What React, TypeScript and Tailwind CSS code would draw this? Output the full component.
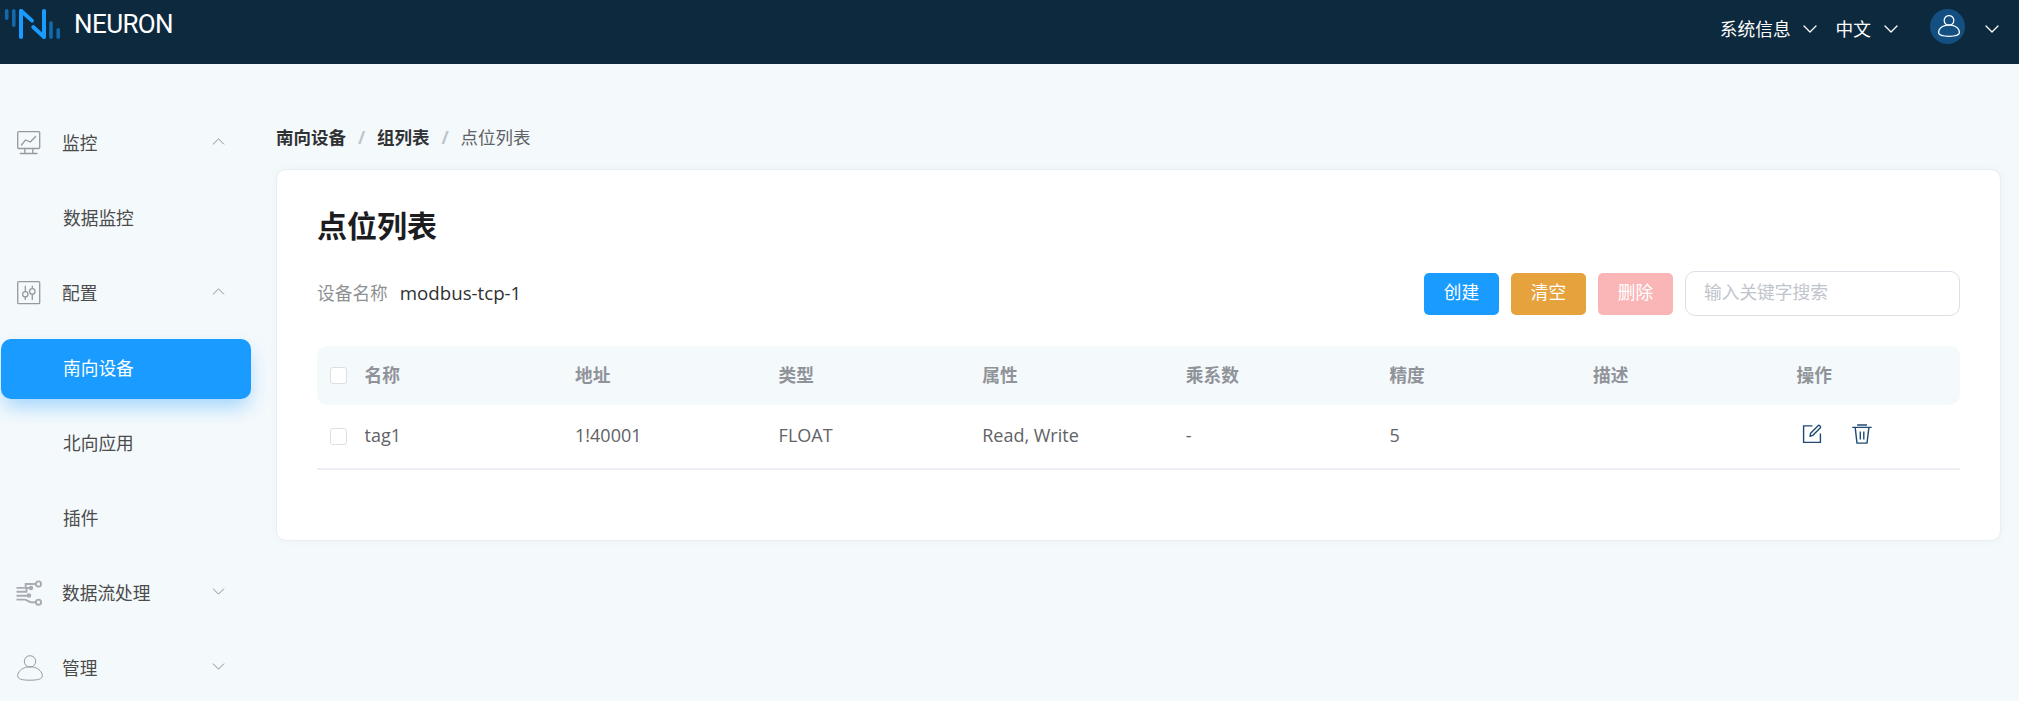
import type { ReactNode } from 'react';

function Chevron({ up = false, className = '' }: { up?: boolean; className?: string }) {
  return (
    <svg viewBox="0 0 14 8" fill="none" stroke="currentColor" strokeLinecap="round" strokeLinejoin="round" className={className}>
      <path d={up ? 'M1 7 L7 1 L13 7' : 'M1 1 L7 7 L13 1'} vectorEffect="non-scaling-stroke" />
    </svg>
  );
}

function Logo() {
  return (
    <svg viewBox="0 0 62 44" className="h-11 w-[62px]" fill="none" stroke="#1a9bff" strokeLinecap="round">
      <g stroke="#1469ab" strokeWidth="3.6">
        <path d="M6.7 10.8V18.2M13.8 10.8V25.2M51 23V37.2M58.2 29.8V37.2" />
      </g>
      <path d="M21 11V37M44 11V37" strokeWidth="4" />
      <path d="M21.2 11L32 20.7M33.2 27L44 37" strokeWidth="3.8" />
    </svg>
  );
}

function UserShape({ className = '' }: { className?: string }) {
  return (
    <svg viewBox="0 0 26 26" fill="none" stroke="currentColor" className={className}>
      <circle cx="13" cy="6.4" r="5.7" />
      <path d="M8.8 12.3C4.2 13.6 .7 17 .7 20.8c0 3.2 4 4.4 12.3 4.4s12.3-1.2 12.3-4.4c0-3.8-3.5-7.2-8.1-8.5-2.6-.7-5.8-.7-8.4 0z" />
    </svg>
  );
}

function MonitorIcon() {
  return (
    <svg viewBox="0 0 26 26" className="ml-px h-[26px] w-[26px]" fill="none" stroke="currentColor" strokeWidth="1.3">
      <rect x="1.7" y="1.7" width="22" height="16.8" rx="1" />
      <path d="M5.5 15L9.5 10L14.3 12L19.6 6.5M8.8 18.5V23.4M16.8 18.5V23.4M4.3 23.5H21" strokeLinecap="round" />
    </svg>
  );
}

function SlidersIcon() {
  return (
    <svg viewBox="0 0 26 26" className="ml-px h-[26px] w-[26px]" fill="none" stroke="currentColor" strokeWidth="1.3">
      <rect x="1.7" y="1.7" width="22" height="22" rx="1" />
      <path d="M9.3 5.8V11.5M9.3 17.2V20M16.3 5.8V8.6M16.3 14.2V20" />
      <circle cx="9.3" cy="14.3" r="2.7" />
      <circle cx="16.3" cy="11.4" r="2.7" />
    </svg>
  );
}

function FlowIcon() {
  return (
    <svg viewBox="0 0 28 28" className="h-7 w-7 text-[#a9acb2]" fill="none" stroke="currentColor" strokeWidth="1.9">
      <path d="M1.5 8.9H10.7V5H21M1.5 12.8H11.5V9H16M1.5 16.7H14M1.5 20.6H9.5C12 20.6 13.5 23.2 16 23.2H21" />
      <circle cx="23.5" cy="5" r="2.6" />
      <circle cx="23.5" cy="23.2" r="2.6" />
      <circle cx="16" cy="9" r="1.3" fill="currentColor" />
      <circle cx="14" cy="16.6" r="1.3" fill="currentColor" />
    </svg>
  );
}

function EditIcon() {
  return (
    <svg viewBox="0 0 20 20" className="h-5 w-5" fill="none" stroke="currentColor" strokeWidth="1.4">
      <path d="M10.5 1.9H1.6V18.4H18.4V9.5" />
      <path d="M8 12.3L8.6 9.3L16.3 1.6C17.2.8 19.3 2.5 18.4 3.7L10.7 11.4L8 12.3Z" strokeLinejoin="round" />
    </svg>
  );
}

function TrashIcon() {
  return (
    <svg viewBox="0 0 20 20" className="h-5 w-5" fill="none" stroke="currentColor" strokeWidth="1.4">
      <path d="M5.2 1H15M.3 3.4H19.7M3.2 3.6L5 19.1H15L16.9 3.6" />
      <path d="M8.3 7.5V15.5M11.8 7.5V15.5" />
    </svg>
  );
}

function MenuGroup({ icon, label, open = false }: { icon: ReactNode; label: string; open?: boolean }) {
  return (
    <div className="flex h-[75px] items-center text-[#4b4b4b]">
      <span className="ml-[15px] flex w-[47px] items-center text-[#96999d]">{icon}</span>
      <span className="flex-1">{label}</span>
      <Chevron up={open} className="mr-[26px] mb-0.5 h-[7px] w-[13px] text-[#8d9195]" />
    </div>
  );
}

function MenuItem({ label, active = false }: { label: string; active?: boolean }) {
  return active ? (
    <div className="mt-[9px] mb-[6px] ml-px flex h-[60px] w-[250px] items-center rounded-[10px] bg-[#1a9bff] pb-0.5 pl-[62px] text-white shadow-[0_10px_20px_-3px_rgba(26,155,255,0.4)]">
      {label}
    </div>
  ) : (
    <div className="flex h-[75px] items-center pl-[63px] text-[#4b4b4b]">{label}</div>
  );
}

function Checkbox() {
  return <span className="ml-[12.5px] block h-[17.5px] w-[17.5px] rounded-[3px] border border-[#dcdfe6] bg-white" />;
}

const GRID = 'grid grid-cols-[47.5px_210.5px_repeat(6,203.6px)_1fr] items-center';
const HEADERS = ['名称', '地址', '类型', '属性', '乘系数', '精度', '描述', '操作'];
const ROW = ['tag1', '1!40001', 'FLOAT', 'Read, Write', '-', '5', ''];

export default function App() {
  return (
    <div className="flex h-[701px] w-full flex-col overflow-hidden bg-[#f4f9fc] font-['Open_Sans','Noto_Sans_CJK_SC',sans-serif] text-[17.7px] leading-6">
      <header className="flex h-16 shrink-0 items-start bg-[#0d293e] text-white">
        <Logo />
        <span className="mt-[9px] ml-3 font-['Roboto',sans-serif] text-[26px] leading-[30px] tracking-[-0.6px]">NEURON</span>
        <div className="ml-auto flex h-[58px] items-center">
          <span>系统信息</span>
          <Chevron className="ml-3 h-2 w-[14px] stroke-[1.3]" />
          <span className="ml-[19px]">中文</span>
          <Chevron className="ml-[13px] h-2 w-[14px] stroke-[1.3]" />
          <span className="mb-[5px] ml-8 flex h-[35px] w-[35px] items-center justify-center rounded-full bg-[#134f80]">
            <UserShape className="mb-0.5 ml-0.5 h-[22px] w-[22px] stroke-[1.5]" />
          </span>
          <Chevron className="mr-5 ml-5 h-2 w-[14px] stroke-[1.3]" />
        </div>
      </header>

      <div className="flex min-h-0 flex-1">
        <nav className="w-[251px] shrink-0 pt-[41px]">
          <MenuGroup icon={<MonitorIcon />} label="监控" open />
          <MenuItem label="数据监控" />
          <MenuGroup icon={<SlidersIcon />} label="配置" open />
          <MenuItem label="南向设备" active />
          <MenuItem label="北向应用" />
          <MenuItem label="插件" />
          <MenuGroup icon={<FlowIcon />} label="数据流处理" />
          <MenuGroup icon={<UserShape className="ml-0.5 h-[26px] w-[26px]" />} label="管理" />
        </nav>

        <main className="ml-[25px] w-[1725px] pt-[61px]">
          <div className="flex h-6 items-center text-[17.5px]">
            <span className="font-bold text-[#303133]">南向设备</span>
            <span className="mx-[11px] w-[9px] text-center font-bold text-[#c0c4cc]">/</span>
            <span className="font-bold text-[#303133]">组列表</span>
            <span className="mx-[11px] w-[9px] text-center font-bold text-[#c0c4cc]">/</span>
            <span className="text-[#606266]">点位列表</span>
          </div>

          <section className="mt-5 h-[372px] rounded-[10px] border border-[#e9edf4] bg-white px-10 shadow-[0_0_10px_rgba(0,0,0,0.04)]">
            <h1 className="pt-[38px] text-[30px] leading-9 font-bold text-[#1d1d1f]">点位列表</h1>
            <div className="mt-[27px] flex h-[45px] items-center">
              <span className="pb-0.5 text-[#8e9194]">设备名称</span>
              <span className="ml-3 pb-0.5 text-[18.7px] text-[#303133]">modbus-tcp-1</span>
              <div className="ml-auto flex items-center gap-3 text-[17.7px] text-white">
                <button className="h-[42px] w-[75px] rounded-[5px] bg-[#1a9bff] pb-1">创建</button>
                <button className="h-[42px] w-[75px] rounded-[5px] bg-[#e6a23c] pb-1">清空</button>
                <button className="h-[42px] w-[75px] rounded-[5px] bg-[#fab6b6] pb-1">删除</button>
                <input
                  placeholder="输入关键字搜索"
                  className="h-[45px] w-[275px] rounded-[10px] border border-[#dcdfe6] bg-white px-[18px] pb-1 placeholder:text-[#c0c4cc]"
                />
              </div>
            </div>

            <div className="mt-[30px]">
              <div className={`${GRID} h-[59px] rounded-[10px] bg-[#f4f9fc] font-bold text-[#909399]`}>
                <Checkbox />
                {HEADERS.map((h) => (
                  <span key={h} className="pb-0.5">{h}</span>
                ))}
              </div>
              <div className={`${GRID} h-[65px] border-b-2 border-[#ebeef5] text-[18px] text-[#606266]`}>
                <Checkbox />
                {ROW.map((v, i) => (
                  <span key={i} className="pb-[3px]">{v}</span>
                ))}
                <span className="mb-1.5 ml-[5px] flex gap-[30px] text-[#1f4a75]">
                  <EditIcon />
                  <TrashIcon />
                </span>
              </div>
            </div>
          </section>
        </main>
      </div>
    </div>
  );
}
